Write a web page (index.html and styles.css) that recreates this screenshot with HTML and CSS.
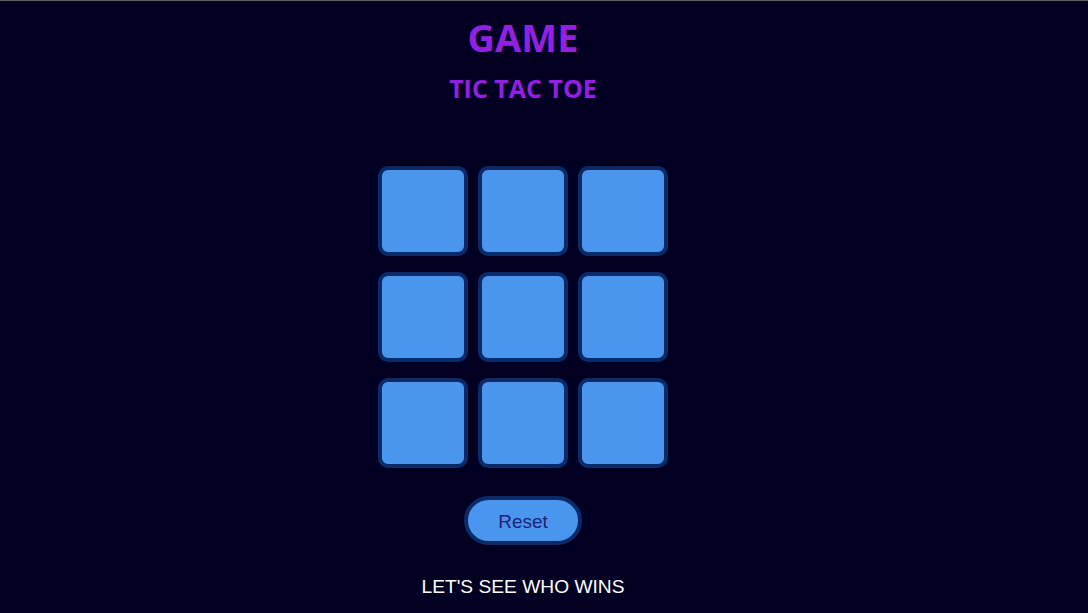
FILE: index.html
```html
<!DOCTYPE html>
<html lang="en">
<head>
<meta charset="UTF-8">
<title>Tic Tac Toe</title>
<link rel="stylesheet" href="styles.css">
</head>
<body>
<main class="page">
  <h1 class="title">GAME</h1>
  <h2 class="subtitle">TIC TAC TOE</h2>
  <div class="board">
    <button class="cell"></button>
    <button class="cell"></button>
    <button class="cell"></button>
    <button class="cell"></button>
    <button class="cell"></button>
    <button class="cell"></button>
    <button class="cell"></button>
    <button class="cell"></button>
    <button class="cell"></button>
  </div>
  <button class="reset">Reset</button>
  <p class="message">LET'S SEE WHO WINS</p>
</main>
</body>
</html>
```
FILE: styles.css
```css
* { box-sizing: border-box; }
html, body {
  margin: 0;
  padding: 0;
  height: 100%;
  background: #020022;
}
body {
  border-top: 1px solid #5c5c5c;
  overflow: hidden;
}
.page {
  width: 1046px;
  display: flex;
  flex-direction: column;
  align-items: center;
}
.title {
  margin: 14px 0 0;
  font-family: "Open Sans", "Noto Sans", sans-serif;
  font-weight: 700;
  font-size: 38px;
  line-height: 1.2;
  color: #9220e0;
}
.subtitle {
  margin: 12px 0 0;
  font-family: "Open Sans", "Noto Sans", sans-serif;
  font-weight: 700;
  font-size: 25px;
  line-height: 1.2;
  color: #9220e0;
}
.board {
  margin-top: 63px;
  display: grid;
  grid-template-columns: repeat(3, 90px);
  grid-auto-rows: 90px;
  column-gap: 10px;
  row-gap: 16px;
}
.cell {
  width: 90px;
  height: 90px;
  border: 4px solid #0b2a68;
  border-radius: 10px;
  background: #4a96ee;
  padding: 0;
}
.reset {
  margin-top: 28px;
  width: 118px;
  height: 49px;
  border: 4px solid #0b2a68;
  border-radius: 25px;
  background: #4a96ee;
  color: #23217c;
  font-family: "Liberation Sans", Arial, sans-serif;
  font-size: 19px;
  padding: 3px 0 0;
}
.message {
  margin: 31px 0 0;
  font-family: "Liberation Sans", Arial, sans-serif;
  font-size: 19.2px;
  color: #ffffff;
}
```
